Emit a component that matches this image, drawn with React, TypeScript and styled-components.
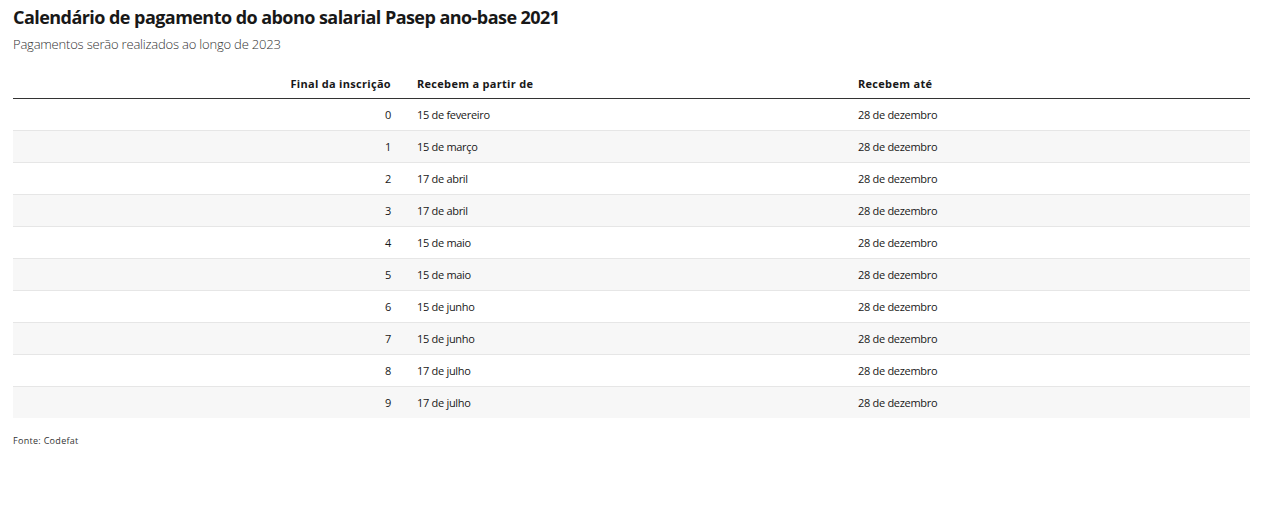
import React from 'react';
import styled, { createGlobalStyle } from 'styled-components';

const GlobalStyle = createGlobalStyle`
  body {
    margin: 0;
    background: #ffffff;
    font-family: 'Open Sans', 'Noto Sans', sans-serif;
    color: #181818;
  }
`;

const Chart = styled.div`
  padding: 5px 13px 0 13px;
`;

const Title = styled.h1`
  margin: 0;
  font-size: 18px;
  line-height: 24px;
  font-weight: 700;
  letter-spacing: -0.55px;
  color: #181818;
`;

const Subtitle = styled.p`
  margin: 7px 0 0 0;
  font-size: 13px;
  line-height: 16px;
  font-weight: 300;
  color: #333;
  letter-spacing: -0.2px;
`;

const Table = styled.table`
  width: 100%;
  margin-top: 21px;
  border-collapse: collapse;
  table-layout: fixed;
`;

const HeadCell = styled.th<{ $align?: 'left' | 'right'; $w: string }>`
  width: ${p => p.$w};
  text-align: ${p => p.$align || 'left'};
  font-size: 11px;
  font-weight: 700;
  color: #181818;
  padding: 0 13px 5px 13px;
  height: 20px;
  vertical-align: middle;
  border-bottom: 1px solid #333;
  letter-spacing: 0.3px;
  &:first-child { padding-left: 0; }
`;

const Row = styled.tr<{ $shaded: boolean }>`
  background: ${p => (p.$shaded ? '#f7f7f7' : '#ffffff')};
  border-bottom: 1px solid #e6e6e6;
  &:last-child { border-bottom: none; }
`;

const Cell = styled.td<{ $align?: 'left' | 'right' }>`
  text-align: ${p => p.$align || 'left'};
  font-size: 11px;
  height: 31px;
  padding: 0 13px;
  color: #181818;
  vertical-align: middle;
  letter-spacing: -0.3px;
  &:first-child { padding-left: 0; }
`;

const Source = styled.div`
  margin-top: 16px;
  font-size: 9px;
  color: #333;
  letter-spacing: 0.3px;
`;

const rows = [
  ['0', '15 de fevereiro'],
  ['1', '15 de março'],
  ['2', '17 de abril'],
  ['3', '17 de abril'],
  ['4', '15 de maio'],
  ['5', '15 de maio'],
  ['6', '15 de junho'],
  ['7', '15 de junho'],
  ['8', '17 de julho'],
  ['9', '17 de julho'],
];

const App: React.FC = () => (
  <>
    <GlobalStyle />
    <Chart>
      <Title>Calendário de pagamento do abono salarial Pasep ano-base 2021</Title>
      <Subtitle>Pagamentos serão realizados ao longo de 2023</Subtitle>
      <Table>
        <thead>
          <tr>
            <HeadCell $align="right" $w="378px">Final da inscrição</HeadCell>
            <HeadCell $w="415px">Recebem a partir de</HeadCell>
            <HeadCell $w="auto">Recebem até</HeadCell>
          </tr>
        </thead>
        <tbody>
          {rows.map(([digit, start], i) => (
            <Row key={digit} $shaded={i % 2 === 1}>
              <Cell $align="right">{digit}</Cell>
              <Cell>{start}</Cell>
              <Cell>28 de dezembro</Cell>
            </Row>
          ))}
        </tbody>
      </Table>
      <Source>Fonte: Codefat</Source>
    </Chart>
  </>
);

export default App;
